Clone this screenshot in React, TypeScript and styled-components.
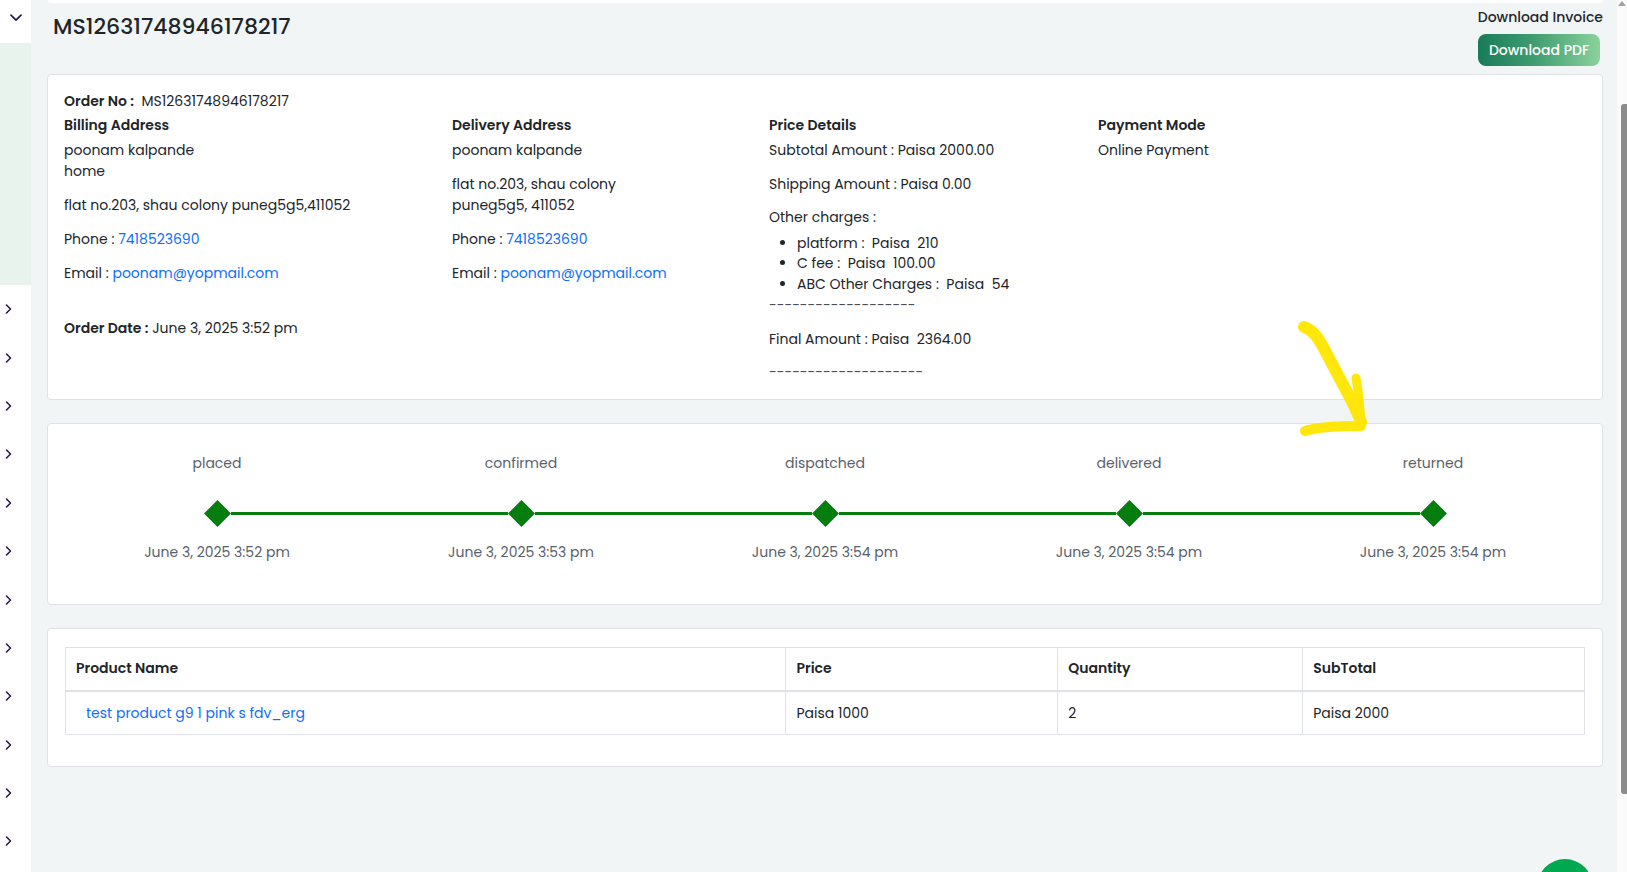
import React from "react";
import styled, { createGlobalStyle } from "styled-components";

const GlobalStyle = createGlobalStyle`
  html, body { margin: 0; padding: 0; }
  * { box-sizing: border-box; }
  body {
    font-family: Poppins, Inter, "Noto Sans", sans-serif;
    color: #212529;
    background: #f1f5f6;
    overflow: hidden;
    font-size: 14px;
  }
`;

const Page = styled.div`
  position: relative;
  display: flex;
  width: 1627px;
  height: 872px;
  overflow: hidden;
  background: #f1f5f6;
`;

const Sidebar = styled.aside`
  flex: none;
  width: 31px;
  background: #ffffff;
  display: flex;
  flex-direction: column;
`;

const SideTop = styled.div`
  height: 43px;
  display: flex;
  justify-content: center;
  padding-top: 14px;
`;

const SideGreen = styled.div`
  height: 242px;
  background: #e8f3ee;
`;

const SideItem = styled.div`
  height: 48.4px;
  display: flex;
  align-items: center;
  padding-left: 5px;
`;

const Main = styled.main`
  flex: 1;
  min-width: 0;
  display: flex;
  flex-direction: column;
  padding: 0 14px 0 16px;
`;

const TopStrip = styled.div`
  height: 3px;
  margin-left: 1px;
  background: #ffffff;
  border-radius: 0 0 6px 6px;
`;

const HeaderRow = styled.div`
  display: flex;
  justify-content: space-between;
  align-items: flex-start;
`;

const Title = styled.h1`
  margin: 10px 0 0 6px;
  font-size: 22px;
  line-height: 27px;
  font-weight: 500;
  color: #212529;
`;

const HeaderActions = styled.div`
  display: flex;
  flex-direction: column;
  align-items: flex-end;
  gap: 6px;
  padding-top: 4px;
  margin-bottom: 8px;
`;

const InvoiceLabel = styled.div`
  font-size: 14px;
  line-height: 21px;
  font-weight: 500;
  color: #212529;
`;

const PdfButton = styled.button`
  width: 122px;
  height: 32px;
  margin-right: 3px;
  border: 0;
  border-radius: 8px;
  background: linear-gradient(90deg, #187b59 0%, #3f9c70 45%, #8ad29c 100%);
  color: #ffffff;
  font-family: inherit;
  font-size: 14px;
  font-weight: 500;
`;

const Card = styled.section<{ $pad: string }>`
  background: #ffffff;
  border: 1px solid #dee2e6;
  border-radius: 4px;
  padding: ${(p) => p.$pad};
  margin-bottom: 22.5px;
`;

const OrderNo = styled.div`
  line-height: 21px;
  margin-bottom: 3px;
  white-space: pre;
`;

const Bold = styled.span`
  font-weight: 600;
`;

const InfoGrid = styled.div`
  display: grid;
  grid-template-columns: 388px 317px 329px 1fr;
`;

const Column = styled.div`
  display: flex;
  flex-direction: column;
`;

const SectionTitle = styled.div`
  font-weight: 600;
  line-height: 21px;
  margin-bottom: 4px;
`;

const Para = styled.p<{ $mb?: number; $mt?: number }>`
  margin: ${(p) => p.$mt ?? 0}px 0 ${(p) => p.$mb ?? 13}px;
  line-height: 21px;
  white-space: pre-wrap;
`;

const Link = styled.a`
  color: #0d6efd;
  text-decoration: none;
`;

const ChargeList = styled.ul`
  margin: 0;
  padding-left: 28px;
  line-height: 20.8px;
`;

const ChargeItem = styled.li`
  white-space: pre-wrap;
`;

const Dashes = styled.div<{ $mb: number }>`
  line-height: 20.8px;
  color: #4a4f55;
  margin-bottom: ${(p) => p.$mb}px;
`;

const StepsGrid = styled.div`
  display: grid;
  grid-template-columns: repeat(5, 1fr);
`;

const Step = styled.div`
  display: flex;
  flex-direction: column;
  align-items: stretch;
`;

const StepLabel = styled.div`
  text-align: center;
  font-size: 14px;
  line-height: 21px;
  color: #5a616b;
  margin-bottom: 25.3px;
`;

const MarkerRow = styled.div`
  display: flex;
  align-items: center;
  height: 27px;
  margin-bottom: 15.4px;
`;

const Segment = styled.div<{ $hidden?: boolean }>`
  flex: 1;
  height: 3px;
  background: ${(p) => (p.$hidden ? "transparent" : "#057e0f")};
`;

const StepDate = styled.div`
  text-align: center;
  font-size: 14px;
  line-height: 21px;
  color: #5a616b;
`;

const Table = styled.table`
  width: 100%;
  border-collapse: collapse;
  border: 1px solid #dee2e6;
  margin-bottom: 14px;
`;

const Th = styled.th<{ $w: number }>`
  width: ${(p) => p.$w}px;
  text-align: left;
  font-weight: 600;
  padding: 10px 10px 10.5px;
  line-height: 21px;
  border: 1px solid #dee2e6;
  border-bottom: 2px solid #dee2e6;
`;

const Td = styled.td`
  padding: 11px 10px 10.5px;
  line-height: 21px;
  border: 1px solid #dee2e6;
`;

const ProductLink = styled(Link)`
  padding-left: 10px;
`;

const Scrollbar = styled.div`
  flex: none;
  width: 10px;
  background: #fafafa;
  display: flex;
  flex-direction: column;
  align-items: flex-end;
`;

const ScrollArrow = styled.div`
  width: 0;
  height: 0;
  margin: 1px 1px 0 0;
  border-left: 4px solid transparent;
  border-right: 4px solid transparent;
  border-bottom: 5px solid #a3a3a3;
`;

const ScrollThumb = styled.div`
  width: 6px;
  height: 690px;
  margin-top: 98px;
  background: #8c8c8c;
  border-radius: 3px 0 0 3px;
`;

const Fab = styled.div`
  position: fixed;
  right: 34px;
  bottom: -43px;
  width: 56px;
  height: 56px;
  border-radius: 50%;
  background: #00a84f;
`;

const Annotation = styled.svg`
  position: absolute;
  left: 1290px;
  top: 312px;
  pointer-events: none;
`;

const ChevronDown = () => (
  <svg width="12" height="8" viewBox="0 0 12 8">
    <path d="M1 1.2 L6 6.2 L11 1.2" fill="none" stroke="#2c1a4a" strokeWidth="1.7" strokeLinecap="round" strokeLinejoin="round" />
  </svg>
);

const ChevronRight = () => (
  <svg width="7" height="10" viewBox="0 0 7 10">
    <path d="M1.5 1 L5.5 5 L1.5 9" fill="none" stroke="#2c1a4a" strokeWidth="1.6" strokeLinecap="round" strokeLinejoin="round" />
  </svg>
);

const Diamond = () => (
  <svg width="27" height="27" viewBox="0 0 27 27">
    <polygon points="13.5,0 27,13.5 13.5,27 0,13.5" fill="#057e0f" />
  </svg>
);

const steps = [
  { label: "placed", date: "June 3, 2025 3:52 pm" },
  { label: "confirmed", date: "June 3, 2025 3:53 pm" },
  { label: "dispatched", date: "June 3, 2025 3:54 pm" },
  { label: "delivered", date: "June 3, 2025 3:54 pm" },
  { label: "returned", date: "June 3, 2025 3:54 pm" },
];

export default function App() {
  return (
    <>
      <GlobalStyle />
      <Page>
        <Sidebar>
          <SideTop>
            <ChevronDown />
          </SideTop>
          <SideGreen />
          {Array.from({ length: 12 }).map((_, i) => (
            <SideItem key={i}>
              <ChevronRight />
            </SideItem>
          ))}
        </Sidebar>

        <Main>
          <TopStrip />
          <HeaderRow>
            <Title>MS12631748946178217</Title>
            <HeaderActions>
              <InvoiceLabel>Download Invoice</InvoiceLabel>
              <PdfButton>Download PDF</PdfButton>
            </HeaderActions>
          </HeaderRow>

          <Card $pad="15.5px 16px 16.5px">
            <OrderNo>
              <Bold>Order No :</Bold>  MS12631748946178217
            </OrderNo>
            <InfoGrid>
              <Column>
                <SectionTitle>Billing Address</SectionTitle>
                <Para>
                  poonam kalpande
                  <br />
                  home
                </Para>
                <Para>flat no.203, shau colony puneg5g5,411052</Para>
                <Para>
                  Phone : <Link href="#">7418523690</Link>
                </Para>
                <Para>
                  Email : <Link href="#">poonam@yopmail.com</Link>
                </Para>
                <Para $mt={21} $mb={0}>
                  <Bold>Order Date :</Bold> June 3, 2025 3:52 pm
                </Para>
              </Column>
              <Column>
                <SectionTitle>Delivery Address</SectionTitle>
                <Para>poonam kalpande</Para>
                <Para>
                  flat no.203, shau colony
                  <br />
                  puneg5g5, 411052
                </Para>
                <Para>
                  Phone : <Link href="#">7418523690</Link>
                </Para>
                <Para>
                  Email : <Link href="#">poonam@yopmail.com</Link>
                </Para>
              </Column>
              <Column>
                <SectionTitle>Price Details</SectionTitle>
                <Para>Subtotal Amount : Paisa 2000.00</Para>
                <Para $mb={12}>Shipping Amount : Paisa 0.00</Para>
                <Para $mb={5}>Other charges :</Para>
                <ChargeList>
                  <ChargeItem>platform :  Paisa  210</ChargeItem>
                  <ChargeItem>C fee :  Paisa  100.00</ChargeItem>
                  <ChargeItem>ABC Other Charges :  Paisa  54</ChargeItem>
                </ChargeList>
                <Dashes $mb={13}>-------------------</Dashes>
                <Para $mb={12.5}>Final Amount : Paisa  2364.00</Para>
                <Dashes $mb={0}>--------------------</Dashes>
              </Column>
              <Column>
                <SectionTitle>Payment Mode</SectionTitle>
                <Para>Online Payment</Para>
              </Column>
            </InfoGrid>
          </Card>

          <Card $pad="29.5px 17px 41px">
            <StepsGrid>
              {steps.map((s, i) => (
                <Step key={s.label}>
                  <StepLabel>{s.label}</StepLabel>
                  <MarkerRow>
                    <Segment $hidden={i === 0} />
                    <Diamond />
                    <Segment $hidden={i === steps.length - 1} />
                  </MarkerRow>
                  <StepDate>{s.date}</StepDate>
                </Step>
              ))}
            </StepsGrid>
          </Card>

          <Card $pad="18.5px 17px 17px">
            <Table>
              <thead>
                <tr>
                  <Th $w={721}>Product Name</Th>
                  <Th $w={272}>Price</Th>
                  <Th $w={245}>Quantity</Th>
                  <Th $w={282}>SubTotal</Th>
                </tr>
              </thead>
              <tbody>
                <tr>
                  <Td>
                    <ProductLink href="#">test product g9 1 pink s fdv_erg</ProductLink>
                  </Td>
                  <Td>Paisa 1000</Td>
                  <Td>2</Td>
                  <Td>Paisa 2000</Td>
                </tr>
              </tbody>
            </Table>
          </Card>
        </Main>

        <Scrollbar>
          <ScrollArrow />
          <ScrollThumb />
        </Scrollbar>

        <Annotation width="90" height="130" viewBox="1290 312 90 130">
          <g fill="none" stroke="#ffe600" strokeLinecap="round" strokeLinejoin="round" opacity="0.95">
            <path d="M1304 327 Q1314 330 1322 345 L1347 392 Q1356 408 1361 422" strokeWidth="12" />
            <path d="M1356 378 Q1360 400 1361 425" strokeWidth="9" />
            <path d="M1305 431 Q1320 426 1361 426" strokeWidth="10" />
          </g>
        </Annotation>

        <Fab />
      </Page>
    </>
  );
}
